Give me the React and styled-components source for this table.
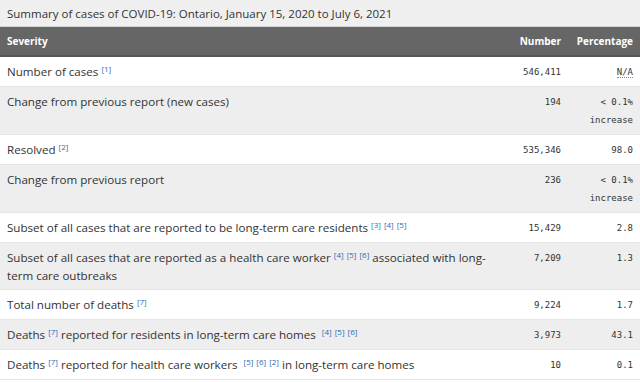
import React from "react";
import styled, { createGlobalStyle } from "styled-components";

const Global = createGlobalStyle`
  html, body { margin: 0; padding: 0; background: #fff; }
  body { font-family: "Open Sans", "Noto Sans", sans-serif; color: #333; }
`;

const Table = styled.table`
  width: 640px;
  border-collapse: collapse;
  table-layout: fixed;
  font-size: 11.6px;
  line-height: 17.5px;
`;

const Caption = styled.caption`
  caption-side: top;
  text-align: left;
  background: #efefef;
  padding: 4px 7px 3px;
  font-size: 11.5px;
  line-height: 19px;
  color: #333;
  border-bottom: 1px solid #d4d4d4;
`;

const HeadRow = styled.tr`
  background: #666;
`;

const Th = styled.th`
  color: #fff;
  font-weight: 700;
  font-size: 10px;
  line-height: 16px;
  padding: 6px 7px 6px;
  text-align: ${(p) => (p.$right ? "right" : "left")};
  border-bottom: 2px solid #555;
`;

const Row = styled.tr`
  background: ${(p) => (p.$alt ? "#eeeeee" : "#ffffff")};
  border-bottom: 1px solid #e6e6e6;
`;

const Td = styled.td`
  padding: 6px 7px 5px;
  vertical-align: top;
  text-align: left;
`;

const NumTd = styled.td`
  padding: 6px 7px 5px;
  vertical-align: top;
  text-align: right;
  font-family: "DejaVu Sans Mono", "Liberation Mono", monospace;
  font-size: 9px;
  line-height: 18px;
  color: #333;
`;

const Ref = styled.sup`
  font-size: 8px;
  line-height: 0;
  color: #2b6ab8;
  vertical-align: 4px;
  & + & { margin-left: 3px; }
`;

const Abbr = styled.abbr`
  text-decoration: none;
  border-bottom: 1px dotted #888;
`;

const Refs = ({ items }) => (
  <>
    {items.map((n, i) => (
      <Ref key={i}>[{n}]</Ref>
    ))}
  </>
);

const rows = [
  { label: <>Number of cases <Refs items={[1]} /></>, num: "546,411", pct: <Abbr title="Not applicable">N/A</Abbr> },
  { label: "Change from previous report (new cases)", num: "194", pct: <>&lt; 0.1%<br />increase</> },
  { label: <>Resolved <Refs items={[2]} /></>, num: "535,346", pct: "98.0" },
  { label: "Change from previous report", num: "236", pct: <>&lt; 0.1%<br />increase</> },
  { label: <>Subset of all cases that are reported to be long-term care residents <Refs items={[3, 4, 5]} /></>, num: "15,429", pct: "2.8" },
  { label: <>Subset of all cases that are reported as a health care worker <Refs items={[4, 5, 6]} /> associated with long-term care outbreaks</>, num: "7,209", pct: "1.3" },
  { label: <>Total number of deaths <Refs items={[7]} /></>, num: "9,224", pct: "1.7" },
  { label: <>Deaths <Refs items={[7]} /> reported for residents in long-term care homes <Refs items={[4, 5, 6]} /></>, num: "3,973", pct: "43.1" },
  { label: <>Deaths <Refs items={[7]} /> reported for health care workers <Refs items={[5, 6, 2]} /> in long-term care homes</>, num: "10", pct: "0.1" },
];

export default function App() {
  return (
    <>
      <Global />
      <Table>
        <Caption>Summary of cases of COVID-19: Ontario, January 15, 2020 to July 6, 2021</Caption>
        <colgroup>
          <col style={{ width: 500 }} />
          <col style={{ width: 68 }} />
          <col style={{ width: 72 }} />
        </colgroup>
        <thead>
          <HeadRow>
            <Th>Severity</Th>
            <Th $right>Number</Th>
            <Th $right>Percentage</Th>
          </HeadRow>
        </thead>
        <tbody>
          {rows.map((r, i) => (
            <Row key={i} $alt={i % 2 === 1}>
              <Td>{r.label}</Td>
              <NumTd>{r.num}</NumTd>
              <NumTd>{r.pct}</NumTd>
            </Row>
          ))}
        </tbody>
      </Table>
    </>
  );
}
